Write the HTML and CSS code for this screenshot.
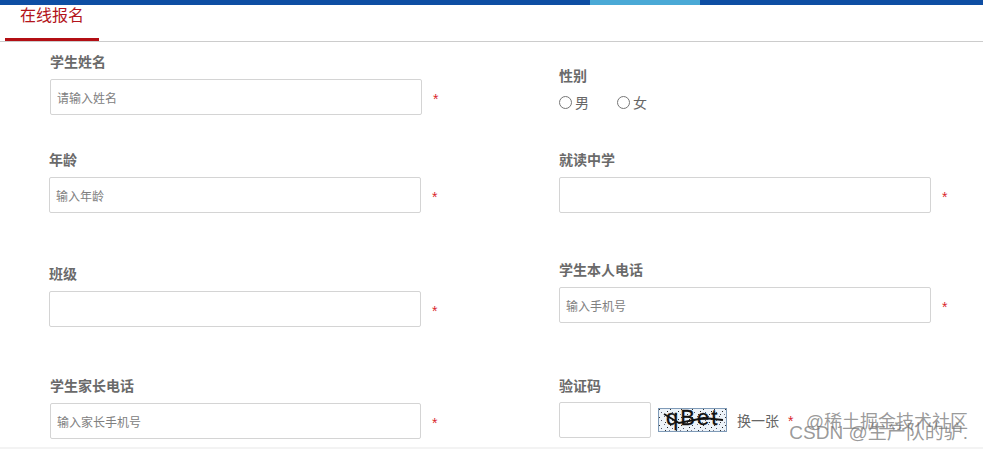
FILE: index.html
```html
<!DOCTYPE html>
<html lang="zh-CN">
<head>
<meta charset="utf-8">
<title>在线报名</title>
<link rel="stylesheet" href="styles.css">
</head>
<body>
<div class="topbar"><span class="topbar-accent"></span></div>
<div class="tabs"><a class="tab">在线报名</a></div>
<form class="form">
  <div class="row row-1">
    <div class="field nudge">
      <label class="label">学生姓名</label>
      <div class="control"><input class="input" placeholder="请输入姓名"><span class="star">*</span></div>
    </div>
    <div class="field drop-14">
      <label class="label">性别</label>
      <div class="radios">
        <label class="radio"><input type="radio" name="sex"><span>男</span></label>
        <label class="radio"><input type="radio" name="sex"><span>女</span></label>
      </div>
    </div>
  </div>
  <div class="row row-2">
    <div class="field">
      <label class="label">年龄</label>
      <div class="control"><input class="input" placeholder="输入年龄"><span class="star">*</span></div>
    </div>
    <div class="field">
      <label class="label">就读中学</label>
      <div class="control"><input class="input"><span class="star">*</span></div>
    </div>
  </div>
  <div class="row row-3">
    <div class="field drop-4">
      <label class="label">班级</label>
      <div class="control"><input class="input"><span class="star">*</span></div>
    </div>
    <div class="field">
      <label class="label">学生本人电话</label>
      <div class="control"><input class="input" placeholder="输入手机号"><span class="star">*</span></div>
    </div>
  </div>
  <div class="row row-4">
    <div class="field nudge">
      <label class="label">学生家长电话</label>
      <div class="control"><input class="input input-narrow" placeholder="输入家长手机号"><span class="star">*</span></div>
    </div>
    <div class="field">
      <label class="label label-tight">验证码</label>
      <div class="captcha-line">
        <input class="input input-code">
        <svg class="captcha" width="69" height="24" viewBox="0 0 69 24">
          <defs>
            <pattern id="noise" width="11" height="8" patternUnits="userSpaceOnUse">
              <rect x="1" y="1" width="1" height="1" fill="#333"/>
              <rect x="6" y="0" width="1" height="1" fill="#667"/>
              <rect x="9" y="3" width="1" height="1" fill="#222"/>
              <rect x="3" y="4" width="1" height="1" fill="#556"/>
              <rect x="0" y="6" width="1" height="1" fill="#778"/>
              <rect x="7" y="6" width="1" height="1" fill="#333"/>
            </pattern>
          </defs>
          <rect width="69" height="24" fill="#edf3f9"/>
          <rect width="69" height="24" fill="url(#noise)"/>
          <text class="captcha-text" x="8" y="17">qBet</text>
          <path d="M6 6 L21 15 L46 10 L65 12" fill="none" stroke="#111" stroke-width="1.8"/>
          <rect x=".5" y=".5" width="68" height="23" fill="none" stroke="#7f9bb8"/>
        </svg>
        <a class="refresh">换一张</a>
        <span class="star star-code">*</span>
      </div>
    </div>
  </div>
</form>
<div class="footer-strip"></div>
<div class="watermark">
  <span class="wm-top">@稀土掘金技术社区</span>
  <span class="wm-bottom">CSDN @生产队的驴.</span>
</div>
</body>
</html>
```
FILE: styles.css
```css
html, body {
  margin: 0;
  padding: 0;
}
body {
  position: relative;
  width: 983px;
  height: 449px;
  overflow: hidden;
  background: #fff;
  color: #666;
  font-family: "Liberation Sans", "Noto Sans CJK SC", sans-serif;
}
.topbar {
  height: 5px;
  background: #0e4ea3;
  padding-left: 590px;
}
.topbar-accent {
  display: block;
  width: 110px;
  height: 5px;
  background: #4aa9d6;
}
.tabs {
  height: 36px;
  border-bottom: 1px solid #ccc;
  padding-left: 5px;
}
.tab {
  display: block;
  box-sizing: border-box;
  width: 94px;
  height: 36px;
  padding: 0 0 0 15px;
  border-bottom: 3px solid #b30f14;
  color: #b3141b;
  font-size: 16px;
  line-height: 22px;
}
.form {
  padding-left: 49px;
}
.row {
  display: grid;
  grid-template-columns: 510px 424px;
  align-items: start;
}
.row-1 { margin-top: 10px; }
.row-2 { margin-top: 35px; }
.row-3 { margin-top: 47px; }
.row-4 { margin-top: 49px; }
.nudge { margin-left: 1px; }
.drop-14 { padding-top: 14px; }
.drop-4 { padding-top: 4px; }
.label {
  display: block;
  height: 20px;
  margin-bottom: 7px;
  font-size: 14px;
  font-weight: 700;
  line-height: 20px;
  color: #6a6a6a;
}
.label-tight { margin-bottom: 6px; }
.control {
  display: flex;
  align-items: center;
}
.input {
  box-sizing: border-box;
  width: 372px;
  height: 36px;
  margin: 0;
  padding: 3px 6px 0;
  background: #fff;
  border: 1px solid #d4d4d4;
  border-radius: 2px;
  font-family: inherit;
  font-size: 12px;
  color: #555;
  outline: none;
}
.input::placeholder { color: #808080; opacity: 1; }
.input-narrow { width: 371px; }
.input-code { width: 92px; }
.star {
  margin-left: 11px;
  padding-top: 4px;
  color: #d9262c;
  font-size: 14px;
  line-height: 16px;
}
.radios {
  display: flex;
  gap: 28px;
  height: 20px;
  margin-top: -1px;
  align-items: center;
}
.radio {
  display: flex;
  align-items: center;
  gap: 3px;
  font-size: 14px;
  color: #666;
}
.radio input {
  width: 13px;
  height: 13px;
  margin: 0;
}
.captcha-line {
  display: flex;
  align-items: center;
}
.captcha {
  display: block;
  margin-left: 7px;
}
.captcha-text {
  font-family: "Liberation Sans", sans-serif;
  font-size: 22px;
  letter-spacing: 2px;
  fill: #111;
  stroke: #111;
  stroke-width: .3px;
}
.refresh {
  margin-left: 10px;
  font-size: 14px;
  color: #666;
}
.star-code {
  margin-left: 9px;
  padding-top: 2px;
}
.footer-strip {
  height: 10px;
  margin-top: 8px;
  background: #f3f3f3;
}
.watermark {
  position: absolute;
  left: 790px;
  top: 412px;
  width: 180px;
  height: 34px;
  color: rgba(110, 110, 110, 0.7);
}
.wm-top {
  position: absolute;
  right: 2px;
  top: 0;
  font-size: 18px;
  line-height: 20px;
  white-space: nowrap;
}
.wm-bottom {
  position: absolute;
  right: 2px;
  top: 10px;
  font-size: 19px;
  line-height: 22px;
  white-space: nowrap;
}
```
